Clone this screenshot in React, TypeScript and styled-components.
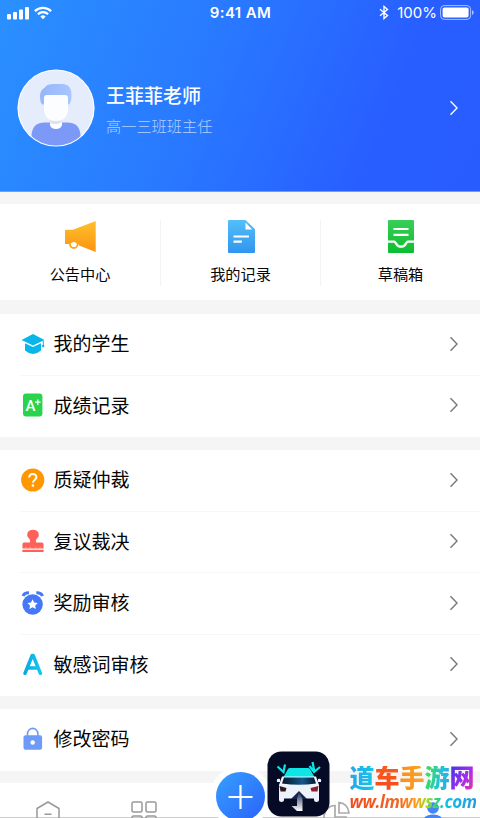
import React from 'react';
import styled, { createGlobalStyle } from 'styled-components';

const Global = createGlobalStyle`
  * { box-sizing: border-box; }
  html, body { margin: 0; background: #fff; }
  body { font-family: Roboto, "Noto Sans CJK SC", sans-serif; color: #050505; }
  svg { display: block; flex: none; }
`;

const Screen = styled.div`
  position: relative;
  width: 480px;
  height: 818px;
  overflow: hidden;
  display: flex;
  flex-direction: column;
  background: #f5f5f5;
`;

const Header = styled.header`
  flex: none;
  height: 192px;
  background: linear-gradient(112deg, #2a90ff 0%, #2979ff 42%, #285eff 78%, #285cff 100%);
  border-bottom: 1px solid #6f9dff;
  color: #fff;
`;

const StatusBar = styled.div`
  display: grid;
  grid-template-columns: 1fr auto 1fr;
  align-items: center;
  height: 25px;
  padding: 0 6px 0 7px;
  font-family: Inter, sans-serif;
`;
const Signals = styled.div`
  display: flex;
  gap: 5px;
`;
const Clock = styled.span`
  font-size: 15px;
  font-weight: 600;
  letter-spacing: 0.4px;
`;
const Power = styled.div`
  display: flex;
  justify-content: flex-end;
  align-items: center;
  font-size: 15px;
`;
const Percent = styled.span`
  margin: 0 3px 0 8px;
`;

const Profile = styled.div`
  display: flex;
  align-items: center;
  height: 78px;
  margin-top: 44px;
  padding: 0 20px 0 17px;
`;
const Identity = styled.div`
  flex: 1;
  margin-left: 11px;
  padding-top: 6px;
`;
const Name = styled.div`
  font-size: 19px;
  line-height: 26px;
  font-weight: 500;
`;
const Role = styled.div`
  margin-top: 6px;
  font-size: 15.2px;
  line-height: 22px;
  font-weight: 300;
  color: #b4d1ff;
`;

const Shortcuts = styled.section`
  flex: none;
  display: grid;
  grid-template-columns: repeat(3, 1fr);
  height: 96px;
  margin: 12px 0 14px;
  padding: 16px 0;
  background: #fff;
`;
const Shortcut = styled.div`
  display: flex;
  flex-direction: column;
  align-items: center;
  & + & { border-left: 1px solid #f3f3f3; }
`;
const ShortcutLabel = styled.span`
  margin-top: 10px;
  font-size: 15.2px;
  line-height: 22px;
`;

const Group = styled.section<{ $gap: number }>`
  flex: none;
  margin-bottom: ${p => p.$gap}px;
  background: #fff;
`;
const Row = styled.div`
  display: flex;
  align-items: center;
  height: 61.5px;
  padding: 0 20px 2px;
  background: linear-gradient(#f7f7f7, #f7f7f7) 20px 100% / 100% 1px no-repeat;
  &:last-child { background: none; }
`;
const RowLabel = styled.span`
  flex: 1;
  margin-left: 7.5px;
  padding-top: 3px;
  font-size: 19px;
  line-height: 28px;
`;

const TabBar = styled.nav`
  flex: none;
  display: grid;
  grid-template-columns: repeat(5, 1fr);
  justify-items: center;
  height: 35.5px;
  padding-top: 17px;
  background: #fff;
  border-bottom: 1px solid #ccc;
`;
const AddButton = styled.div`
  position: relative;
  width: 49px;
  height: 49px;
  margin-top: -28px;
  border-radius: 50%;
  background: linear-gradient(135deg, #36a0ff, #2a62fa);
  box-shadow: 0 0 0 6px #fff;
`;

const Watermark = styled.div`
  position: absolute;
  left: 267px;
  top: 751px;
  display: flex;
  align-items: flex-start;
`;
const SiteText = styled.div`
  margin: 15px 0 0 19.5px;
`;
const SiteName = styled.div`
  display: flex;
  font-size: 25px;
  line-height: 26px;
  font-weight: 900;
`;
const Glyph = styled.span<{ $paint: string }>`
  color: transparent;
  background: ${p => p.$paint};
  background-clip: text;
`;
const SiteUrl = styled.div`
  width: 126px;
  white-space: nowrap;
  font: italic 700 17px/20px "Open Sans", sans-serif;
  letter-spacing: -0.45px;
  color: transparent;
  background: linear-gradient(90deg, #f14b20 0%, #f26422 38%, #ff9b1b 52%, #a1dc22 61%, #38d674 68%, #10bfe1 76%, #249be5 100%);
  background-clip: text;
`;

const Chevron = ({ color = '#777' }: { color?: string }) => (
  <svg width="12" height="18" viewBox="0 0 12 18" fill="none" stroke={color} strokeWidth="1.4">
    <path d="M2.500 2.300 9 9 2.500 15.700" />
  </svg>
);

const SignalIcon = () => (
  <svg width="22" height="14" viewBox="0 0 22 14" fill="#fff">
    <rect y="8" width="4" height="5.500" rx="1" />
    <rect x="6" y="6" width="4" height="7.500" rx="1" />
    <rect x="12" y="3.500" width="4" height="10" rx="1" />
    <rect x="18" y="1" width="4" height="12.500" rx="1" />
  </svg>
);
const WifiIcon = () => (
  <svg width="18" height="14" viewBox="0 0 18 14" fill="none" stroke="#fff" strokeWidth="2.300">
    <path d="M.9 5.100a11.600 11.600 0 0 1 16.200 0M3.900 8.300a7.300 7.300 0 0 1 10.200 0" />
    <path d="M9 13.300 6.300 10.600a4 4 0 0 1 5.400 0Z" fill="#fff" stroke="none" />
  </svg>
);
const BluetoothIcon = () => (
  <svg width="10" height="15" viewBox="0 0 10 15" fill="none" stroke="#fff" strokeWidth="1.400">
    <path d="m1 4.200 7.500 6.300L5 13.500v-12l3.500 3L1 10.800" />
  </svg>
);
const BatteryIcon = () => (
  <svg width="34" height="15" viewBox="0 0 34 15">
    <rect x=".6" y=".6" width="30" height="13.800" rx="3.600" fill="none" stroke="#a7c1ff" />
    <rect x="2.600" y="2.400" width="26" height="10.200" rx="1.800" fill="#fff" />
    <path d="M32 5v5q1.700-.7 1.700-2.500T32 5Z" fill="#a7c1ff" />
  </svg>
);

const Avatar = () => (
  <svg width="78" height="78" viewBox="0 0 78 78">
    <defs>
      <clipPath id="face"><circle cx="39" cy="39" r="37.500" /></clipPath>
      <linearGradient id="hair" x2="1" y2=".3"><stop stopColor="#92b4f8" /><stop offset="1" stopColor="#a9c6ff" /></linearGradient>
    </defs>
    <circle cx="39" cy="39" r="38.600" fill="#fff" />
    <circle cx="39" cy="39" r="37.500" fill="#e5edfd" />
    <g clipPath="url(#face)">
      <path d="M14.500 78V68q0-14.500 13-14.500h23q13 0 13 14.500v10Z" fill="#7d99f8" />
      <path d="M33 49h12v7q-1 4-6 4t-6-4Z" fill="#fff" />
      <path d="M33 50h12v3q-6 4-12 1Z" fill="#dfe3ee" />
      <path d="M25.500 35.500Q23 34 23 27q0-6 5-8.500 1-3.500 9-3.500h8q9.500 0 9.500 11 0 7-2.500 9.500Z" fill="url(#hair)" />
      <path d="M27 29q0-3 3-3h18q3 0 3 3v10q0 13-12 13T27 39Z" fill="#fcfdff" />
    </g>
  </svg>
);

const MegaphoneIcon = () => (
  <svg width="34" height="34" viewBox="0 0 34 34">
    <defs><linearGradient id="horn" x2="0" y2="1"><stop stopColor="#ffc02d" /><stop offset="1" stopColor="#fb9410" /></linearGradient></defs>
    <circle cx="10.800" cy="24.200" r="3.800" fill="#fff" stroke="#fda51b" strokeWidth="1.800" />
    <path fill="url(#horn)" d="M2 10.500q0-.8.8-.8H10L32.700 1v31L16 25.500Q15 22.500 11 22.500q-3.500 0-5 1.500H2Z" />
    <circle cx="10.800" cy="24.200" r="2.200" fill="#fff" />
  </svg>
);
const RecordIcon = () => (
  <svg width="34" height="34" viewBox="0 0 34 34">
    <defs><linearGradient id="paper" x2="0" y2="1"><stop stopColor="#52bff9" /><stop offset="1" stopColor="#3095ef" /></linearGradient></defs>
    <path fill="url(#paper)" d="M5 0h16.500L31 9.300V32q0 1-1 1H5q-1 0-1-1V1q0-1 1-1Z" />
    <path fill="#fff" d="M21.500 2.500v7h6.700z" />
    <path stroke="#fff" strokeWidth="2.200" d="M9.500 16.500h15.400M9.500 21.700h8.300" />
  </svg>
);
const DraftsIcon = () => (
  <svg width="34" height="34" viewBox="0 0 34 34" fill="none">
    <defs><linearGradient id="tray" x2="0" y2="1"><stop stopColor="#39ce57" /><stop offset="1" stopColor="#0dbd30" /></linearGradient></defs>
    <rect x="4" width="26" height="33" rx="1" fill="url(#tray)" />
    <path stroke="#fff" strokeWidth="2.200" d="M9.500 9h15M9.500 14.800h15M4 21.700h6.200c2 0 1.600 5 6.800 5s4.800-5 6.800-5H30" />
  </svg>
);

const StudentIcon = () => (
  <svg width="26" height="26" viewBox="0 0 26 26">
    <path d="M1.500 9 13 3l11.500 6L13 14.500Z" fill="#0ab5e9" />
    <path d="m5 12.300 8 3.800 8-3.800v7.200Q17 23 13 23t-8-3.500Z" fill="#0ab5e9" />
    <path d="M23.300 9.500V15" stroke="#0ab5e9" strokeWidth="1" /><circle cx="23.200" cy="15" r="1.200" fill="#0ab5e9" />
  </svg>
);
const IconText = styled.text`
  font-family: Roboto, sans-serif;
  font-size: 15px;
  font-weight: 500;
  fill: #fff;
`;
const GradeIcon = () => (
  <svg width="26" height="26" viewBox="0 0 26 26">
    <rect x="3" y="1.600" width="19.400" height="23" rx="3" fill="#29d34b" />
    <IconText x="5.500" y="19">A</IconText>
    <path d="M15 10.200h5.600M17.800 7.400V13" stroke="#fff" strokeWidth="1.300" />
  </svg>
);
const QuestionIcon = () => (
  <svg width="26" height="26" viewBox="0 0 26 26" fill="none">
    <circle cx="12.700" cy="13" r="11.600" fill="#ff9800" />
    <path d="M9.200 10.500c0-4.800 7.200-4.700 7.200-.4 0 3-3.500 2.800-3.500 5.700" stroke="#fff" strokeWidth="2" />
    <circle cx="12.900" cy="18.500" r="1.300" fill="#fff" />
  </svg>
);
const StampIcon = () => (
  <svg width="26" height="26" viewBox="0 0 26 26" fill="#ff6159">
    <path d="M9.800 14.500Q11 12 8.500 10q-2-2-1-5.200Q9 1.800 13 1.800t5.500 3q1 3.200-1 5.200-2.500 2-1.300 4.500H22q1.500 0 1.500 1.600v4.500h-21v-4.500q0-1.600 1.500-1.600Z" />
    <rect x="2.400" y="21.800" width="21.200" height="2.200" />
    <path d="M6 18.800v1.800m4-1.800v1.800m6-1.800v1.800m4-1.800v1.800" stroke="#ffb8b2" strokeWidth=".8" />
  </svg>
);
const AwardIcon = () => (
  <svg width="26" height="26" viewBox="0 0 26 26">
    <circle cx="12.600" cy="14.500" r="10.200" fill="#4478f7" />
    <path d="M3 6q1.500-3.500 6-3.300M16.300 2.700Q21 2.500 22.600 6" fill="none" stroke="#4478f7" strokeWidth="3" />
    <path d="m12.600 9.300 1.600 3.200 3.600.5-2.600 2.500.6 3.500-3.200-1.700-3.200 1.700.6-3.500-2.600-2.500 3.600-.5Z" fill="#fff" />
  </svg>
);
const LetterIcon = () => (
  <svg width="26" height="26" viewBox="0 0 26 26" fill="none">
    <defs><linearGradient id="stroke" gradientUnits="userSpaceOnUse" x1="4" y1="0" x2="22" y2="0"><stop stopColor="#05a8e3" /><stop offset="1" stopColor="#17c9ec" /></linearGradient></defs>
    <path d="M5 22.300 12.200 4.500h1L20.400 22.300M7.500 17H18" stroke="url(#stroke)" strokeWidth="3.500" strokeLinecap="round" strokeLinejoin="round" />
  </svg>
);
const LockIcon = () => (
  <svg width="26" height="26" viewBox="0 0 26 26" fill="none">
    <path d="M7.500 11V8a5.200 5.600 0 0 1 10.400 0v3" stroke="#6f9bf8" strokeWidth="1.600" />
    <rect x="3.500" y="9.200" width="18.600" height="14.600" rx="2" fill="#6f9bf8" />
    <circle cx="12.700" cy="16.500" r="2.200" fill="#fff" />
  </svg>
);

const HomeTab = () => (
  <svg width="26" height="26" viewBox="0 0 26 26" fill="none" stroke="#999" strokeWidth="1.500">
    <path d="M2 26V8.500L13 2l11 6.500V26M9.500 14.300h7" strokeLinejoin="round" />
  </svg>
);
const GridTab = () => (
  <svg width="28" height="26" viewBox="0 0 28 26" fill="none" stroke="#999" strokeWidth="1.500">
    <rect x="2" y="2" width="10" height="10" rx="1.500" /><rect x="16" y="2" width="10" height="10" rx="1.500" />
    <rect x="2" y="16" width="10" height="10" rx="1.500" /><rect x="16" y="16" width="10" height="10" rx="1.500" />
  </svg>
);
const ChartTab = () => (
  <svg width="28" height="26" viewBox="0 0 28 26" fill="none" stroke="#aaa" strokeWidth="1.700">
    <path d="M13 5.500A11 11 0 1 0 24 17H13ZM17 2.500V13h10Q26 3.500 17 2.500Z" />
  </svg>
);
const ProfileTab = () => (
  <svg width="28" height="26" viewBox="0 0 28 26" fill="#4585f5">
    <circle cx="15" cy="8" r="5.800" /><path d="M5.500 20q1-5.500 9.500-5.500t9.500 5.500v6h-19Z" />
  </svg>
);
const PlusIcon = () => (
  <svg width="49" height="49" viewBox="0 0 49 49" stroke="#fff" strokeWidth="2.200">
    <path d="M12.500 25h24M24.500 13v24" />
  </svg>
);

const CarLogo = () => (
  <svg width="63" height="66" viewBox="0 0 63 66">
    <defs>
      <linearGradient id="arrow" x2="0" y2="1"><stop stopColor="#1e2c5e" /><stop offset="1" stopColor="#fff" /></linearGradient>
      <linearGradient id="glass" x2="1"><stop stopColor="#081428" /><stop offset=".6" stopColor="#12598a" /><stop offset="1" stopColor="#07142b" /></linearGradient>
    </defs>
    <rect x=".5" y=".5" width="62" height="65" rx="14" fill="#060b25" />
    <path d="M16.500 26 21 18q.6-1 2-1h18q1.400 0 2 1l4.500 8Z" fill="#0de5e7" />
    <path d="M15 25.500h34L52 34v15q0 2-2.500 2T47 49v-1.500H17V49q0 2-2.500 2T12 49V34Z" fill="#eef2fb" />
    <path d="M17 26.500h30l2 6q-17 2.500-34 0Z" fill="url(#glass)" />
    <path d="M13 28q-4-1-3 3h3ZM51 28q4-1 3 3h-3Z" fill="#eef2fb" />
    <path d="m12.500 35 7 2-1 3.500h-5Z" fill="#31171e" /><path d="m51.500 35-8 2 1 3.500h6Z" fill="#8a2029" />
    <path d="m32 40 8 8H24Z" fill="#172349" />
    <path d="m32 41 3.500 7v12H30l-5.500-5H30v-7Z" fill="url(#arrow)" />
    <path d="m10.500 15.500 6 5.500 1.500-7.500M45.500 11l2 10M42.500 15l4.500 6 6-5" fill="none" stroke="#0de5e7" strokeWidth="2.200" />
  </svg>
);

const shortcuts = [
  { label: '公告中心', Icon: MegaphoneIcon },
  { label: '我的记录', Icon: RecordIcon },
  { label: '草稿箱', Icon: DraftsIcon },
];

const groups = [
  { gap: 13, rows: [{ label: '我的学生', Icon: StudentIcon }, { label: '成绩记录', Icon: GradeIcon }] },
  {
    gap: 13,
    rows: [
      { label: '质疑仲裁', Icon: QuestionIcon },
      { label: '复议裁决', Icon: StampIcon },
      { label: '奖励审核', Icon: AwardIcon },
      { label: '敏感词审核', Icon: LetterIcon },
    ],
  },
  { gap: 12, rows: [{ label: '修改密码', Icon: LockIcon }] },
];

const siteName = [
  { char: '道', paint: 'linear-gradient(90deg, #25a7e8, #14c8e8)' },
  { char: '车', paint: 'linear-gradient(#fb5b17, #f44725)' },
  { char: '手', paint: 'linear-gradient(90deg, #ff8c13, #f5a829)' },
  { char: '游', paint: 'linear-gradient(100deg, #37dc60 15%, #20c2dc 60%, #32a1e8)' },
  { char: '网', paint: 'linear-gradient(120deg, #3d36e5, #a52bf0 55%, #f03a8c)' },
];

export default function App() {
  return (
    <>
      <Global />
      <Screen>
        <Header>
          <StatusBar>
            <Signals><SignalIcon /><WifiIcon /></Signals>
            <Clock>9:41 AM</Clock>
            <Power><BluetoothIcon /><Percent>100%</Percent><BatteryIcon /></Power>
          </StatusBar>
          <Profile>
            <Avatar />
            <Identity>
              <Name>王菲菲老师</Name>
              <Role>高一三班班主任</Role>
            </Identity>
            <Chevron color="#fff" />
          </Profile>
        </Header>
        <Shortcuts>
          {shortcuts.map(({ label, Icon }) => (
            <Shortcut key={label}><Icon /><ShortcutLabel>{label}</ShortcutLabel></Shortcut>
          ))}
        </Shortcuts>
        {groups.map(({ gap, rows }) => (
          <Group key={rows[0].label} $gap={gap}>
            {rows.map(({ label, Icon }) => (
              <Row key={label}><Icon /><RowLabel>{label}</RowLabel><Chevron /></Row>
            ))}
          </Group>
        ))}
        <TabBar>
          <HomeTab />
          <GridTab />
          <AddButton><PlusIcon /></AddButton>
          <ChartTab />
          <ProfileTab />
        </TabBar>
        <Watermark>
          <CarLogo />
          <SiteText>
            <SiteName>
              {siteName.map(({ char, paint }) => <Glyph key={char} $paint={paint}>{char}</Glyph>)}
            </SiteName>
            <SiteUrl>ww.lmwwsz.com</SiteUrl>
          </SiteText>
        </Watermark>
      </Screen>
    </>
  );
}
